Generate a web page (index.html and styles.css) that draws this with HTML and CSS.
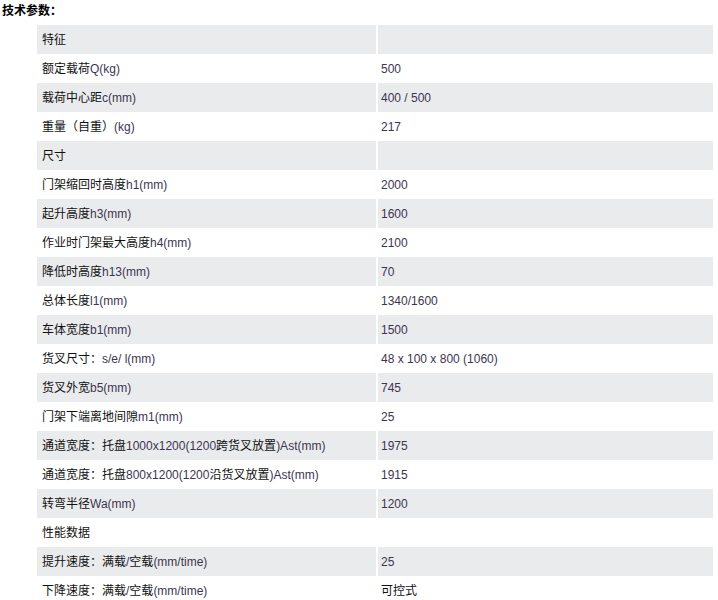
FILE: index.html
```html
<!DOCTYPE html>
<html lang="zh-CN">
<head>
<meta charset="utf-8">
<title>技术参数</title>
<link rel="stylesheet" href="styles.css">
</head>
<body>
<div class="title">技术参数：</div>
<table class="spec">
<tbody>
<tr class="g"><td>特征</td><td></td></tr>
<tr><td>额定载荷<span class="en">Q(kg)</span></td><td class="en">500</td></tr>
<tr class="g"><td>载荷中心距<span class="en">c(mm)</span></td><td class="en">400 / 500</td></tr>
<tr><td>重量（自重）<span class="en">(kg)</span></td><td class="en">217</td></tr>
<tr class="g"><td>尺寸</td><td></td></tr>
<tr><td>门架缩回时高度<span class="en">h1(mm)</span></td><td class="en">2000</td></tr>
<tr class="g"><td>起升高度<span class="en">h3(mm)</span></td><td class="en">1600</td></tr>
<tr><td>作业时门架最大高度<span class="en">h4(mm)</span></td><td class="en">2100</td></tr>
<tr class="g"><td>降低时高度<span class="en">h13(mm)</span></td><td class="en">70</td></tr>
<tr><td>总体长度<span class="en">l1(mm)</span></td><td class="en">1340/1600</td></tr>
<tr class="g"><td>车体宽度<span class="en">b1(mm)</span></td><td class="en">1500</td></tr>
<tr><td>货叉尺寸：<span class="en">s/e/ l(mm)</span></td><td class="en">48 x 100 x 800 (1060)</td></tr>
<tr class="g"><td>货叉外宽<span class="en">b5(mm)</span></td><td class="en">745</td></tr>
<tr><td>门架下端离地间隙<span class="en">m1(mm)</span></td><td class="en">25</td></tr>
<tr class="g"><td>通道宽度：托盘<span class="en">1000x1200(1200</span>跨货叉放置<span class="en">)Ast(mm)</span></td><td class="en">1975</td></tr>
<tr><td>通道宽度：托盘<span class="en">800x1200(1200</span>沿货叉放置<span class="en">)Ast(mm)</span></td><td class="en">1915</td></tr>
<tr class="g"><td>转弯半径<span class="en">Wa(mm)</span></td><td class="en">1200</td></tr>
<tr><td>性能数据</td><td></td></tr>
<tr class="g"><td>提升速度：满载<span class="en">/</span>空载<span class="en">(mm/time)</span></td><td class="en">25</td></tr>
<tr><td>下降速度：满载<span class="en">/</span>空载<span class="en">(mm/time)</span></td><td>可控式</td></tr>
</tbody>
</table>
</body>
</html>
```

FILE: styles.css
```css
html, body {
  margin: 0;
  padding: 0;
  background: #fff;
}

body {
  padding: 1px 2px 0;
  font-family: "Liberation Sans", "Noto Sans CJK SC", sans-serif;
  font-size: 12px;
  color: #111;
}

.title {
  font-weight: bold;
  font-size: 12px;
  line-height: 20px;
  color: #000;
  margin-bottom: 4px;
}

.spec {
  margin-left: 35px;
  width: 676px;
  border-collapse: collapse;
  border-spacing: 0;
}

.spec td {
  height: 29px;
  padding: 0 0 0 5px;
  vertical-align: middle;
  line-height: 16px;
  white-space: nowrap;
}

.spec td:first-child {
  width: 334px;
}

.spec td + td {
  border-left: 2px solid #fff;
  padding-left: 3px;
}

.spec tr.g td {
  background: #eaebed;
}

.en {
  color: #3d3550;
}
```
